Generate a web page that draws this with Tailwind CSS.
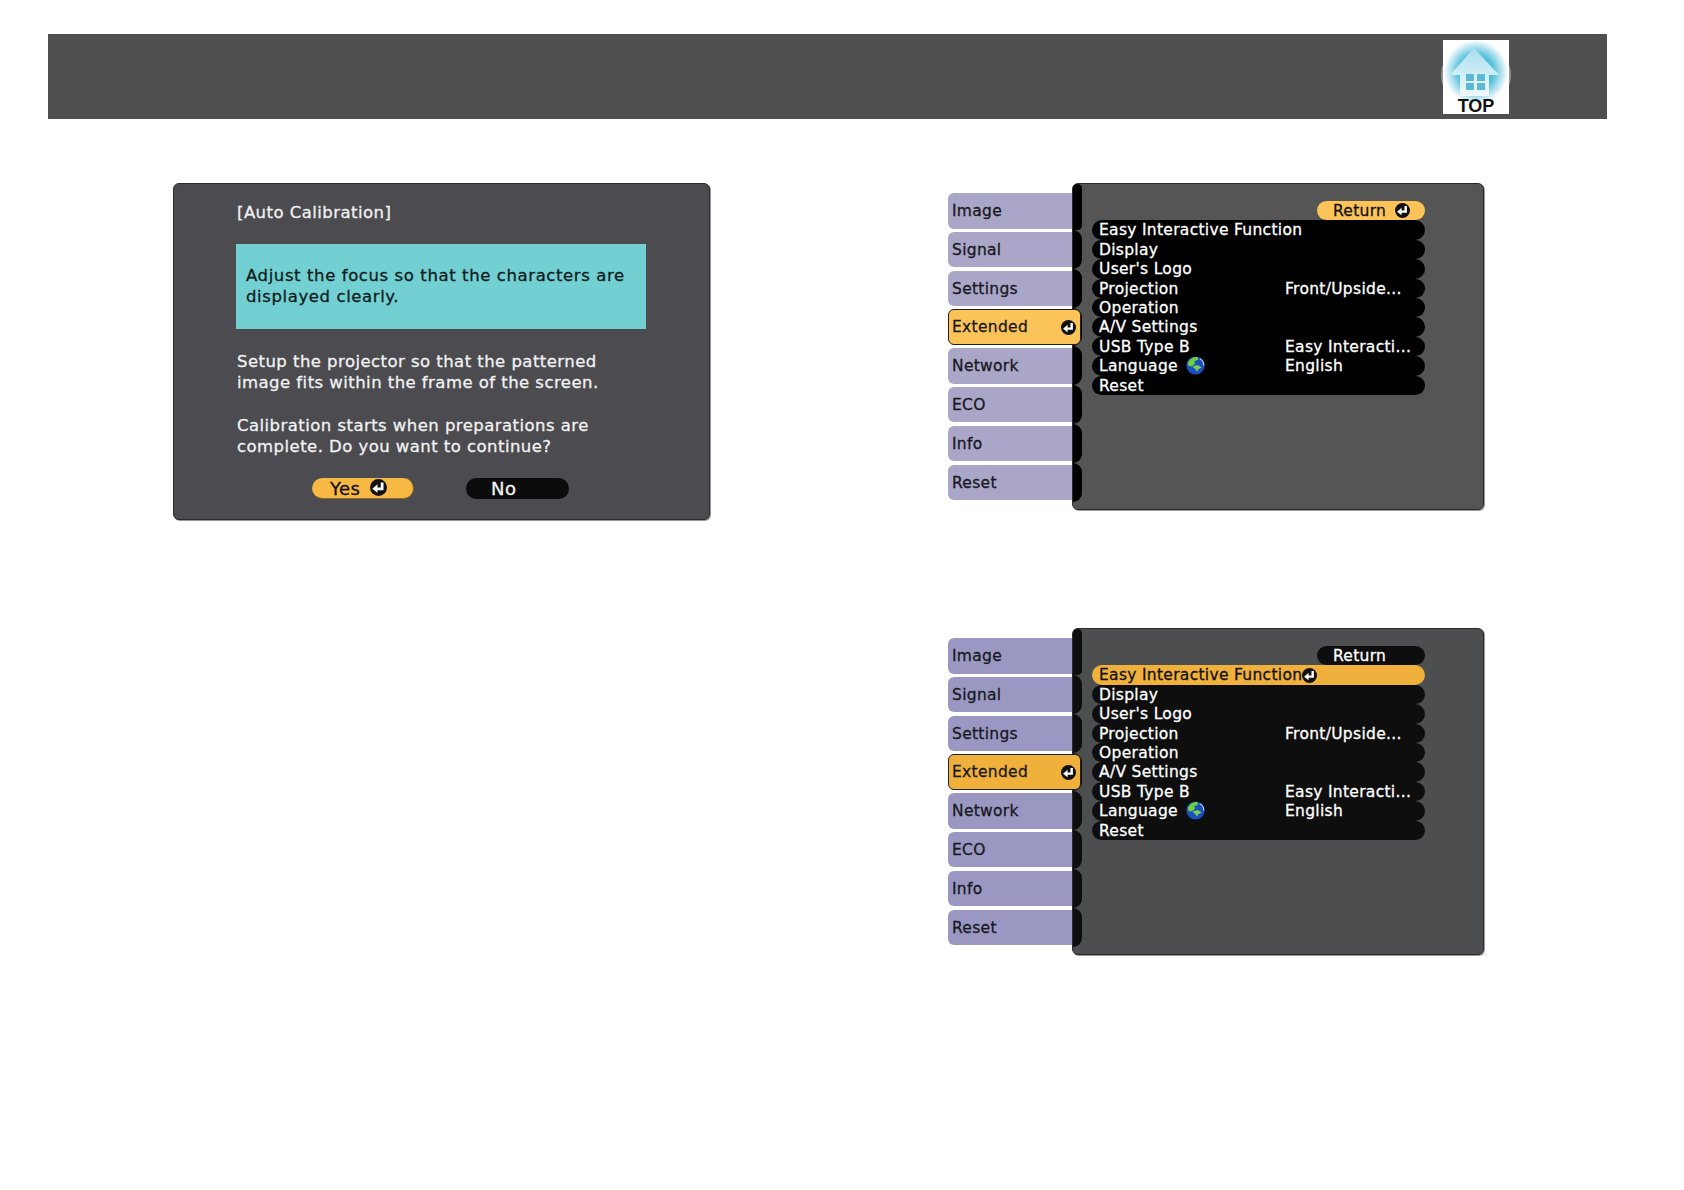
<!DOCTYPE html>
<html lang="en">
<head>
    <meta charset="UTF-8">
    <title>Auto Calibration</title>
    <script src="https://cdn.jsdelivr.net/npm/@tailwindcss/browser@4"></script>
</head>
<body class="bg-white font-['DejaVu_Sans',sans-serif] [-webkit-text-stroke:0.3px]">

    <!-- shared icons -->
    <svg class="absolute" width="0" height="0">
        <symbol id="enter" viewBox="0 0 16 16">
            <circle cx="8" cy="8" r="8" fill="#111"/>
            <path d="M11.4 3.2V9.2H6" fill="none" stroke="#fff" stroke-width="2.6"/>
            <path d="M7 5V13L2.2 9.2Z" fill="#fff"/>
        </symbol>
        <symbol id="globe" viewBox="0 0 18 18">
            <circle cx="9" cy="9" r="8.6" fill="#1b4fc0"/>
            <path d="M3 4.5C5 1.5 9 0.5 11 1.2L11.5 3.5L8 5L8.5 7.5L5 10L2 9C1.5 7 2 6 3 4.5Z" fill="#6fd03c"/>
            <path d="M6 10L11 8.5L15 11L11.5 12.5L10.5 15L9 12.5Z" fill="#7ccf52"/>
            <path d="M13 2.5C15.5 4 17 6.5 16.8 9" fill="none" stroke="#c8e0ff" stroke-width="1"/>
        </symbol>
    </svg>

    <div class="pt-[34px] px-[48px] w-[1684px] h-[1190px] overflow-hidden">

        <!-- header bar -->
        <header class="bg-[#4f4f4f] h-[85px] w-[1559px] flex justify-end pt-[6px] pr-[98px]">
            <div class="relative w-[66px] h-[74px]">
                <div class="absolute left-[-2px] top-[3px] w-[70px] h-[64px] rounded-full bg-white/40"></div>
                <svg class="relative overflow-visible" width="66" height="74" viewBox="0 0 66 74">
                    <defs>
                        <radialGradient id="glow" cx="50%" cy="50%" r="50%">
                            <stop offset="0%" stop-color="#149fc9"/>
                            <stop offset="55%" stop-color="#58c0dc"/>
                            <stop offset="100%" stop-color="#ffffff"/>
                        </radialGradient>
                        <linearGradient id="house" x1="0" y1="0" x2="0" y2="1">
                            <stop offset="0%" stop-color="#a8dfee"/>
                            <stop offset="100%" stop-color="#f0fafc"/>
                        </linearGradient>
                    </defs>
                    <rect width="66" height="74" fill="#fff"/>
                    <circle cx="33" cy="32" r="32" fill="url(#glow)"/>
                    <path d="M31 8L56 35H46V56H17V35H7Z" fill="url(#house)"/>
                    <g fill="#5cb8d6">
                        <rect x="23" y="34" width="8" height="7"/>
                        <rect x="34" y="34" width="8" height="7"/>
                        <rect x="23" y="43" width="8" height="7"/>
                        <rect x="34" y="43" width="8" height="7"/>
                    </g>
                    <text x="33" y="72" text-anchor="middle" font-family="Liberation Sans" font-weight="700" font-size="18" fill="#111">TOP</text>
                </svg>
            </div>
        </header>

        <div class="flex items-start mt-[64px]">

            <!-- auto calibration dialog -->
            <section class="ml-[125px] w-[537px] h-[337px] flex-none bg-[#4b4b50] border border-[#2c2c2c] rounded-md shadow-[1px_1px_0_#9a9a9a] pl-[63px] pt-[18px] text-[16.5px] leading-[21.5px] tracking-[0.45px] text-[#f2f2f2]">
                <p>[Auto Calibration]</p>
                <div class="bg-[#72cfd2] text-[#0c1c20] tracking-[0.6px] w-[410px] h-[85px] -ml-px mt-[20px] pt-[21px] pl-[10px]">
                    <p>Adjust the focus so that the characters are<br>displayed clearly.</p>
                </div>
                <p class="mt-[22px]">Setup the projector so that the patterned<br>image fits within the frame of the screen.</p>
                <p class="mt-[21px]">Calibration starts when preparations are<br>complete. Do you want to continue?</p>
                <div class="flex mt-[20px] ml-[75px] gap-[52px] h-[21px]">
                    <div class="w-[102px] rounded-full bg-[#f7b944] border-b border-r border-[#8a6a20] text-[#111] text-[18px] flex items-center pl-[18px]">
                        <span class="pt-[2px]">Yes</span>
                        <svg class="ml-[10px]" width="17" height="17"><use href="#enter"/></svg>
                    </div>
                    <div class="w-[103px] rounded-full bg-[#0c0c0c] text-[18px] flex items-center pl-[25px] pt-[2px]">No</div>
                </div>
            </section>

            <div class="ml-[238px] flex-none">

                <!-- extended menu, Return selected -->
                <div class="flex items-start text-[15.5px] leading-[19.4px] tracking-[0.3px]">
                    <nav class="w-[124px] flex-none pt-[10px] flex flex-col gap-[3.3px] text-[#181820]">
                        <div class="h-[35.5px] bg-[#a9a6c8] rounded-l-md flex items-center pl-[4px] pt-[2px]">Image</div>
                        <div class="h-[35.5px] bg-[#a9a6c8] rounded-l-md flex items-center pl-[4px] pt-[2px]">Signal</div>
                        <div class="h-[35.5px] bg-[#a9a6c8] rounded-l-md flex items-center pl-[4px] pt-[2px]">Settings</div>
                        <div class="relative z-10 w-[133px] h-[35.5px] bg-[#fcc458] border border-[#222] rounded-md flex items-center justify-between pl-[3px] pr-[4px]"><span class="pt-[2px]">Extended</span><svg width="15" height="15"><use href="#enter"/></svg></div>
                        <div class="h-[35.5px] bg-[#a9a6c8] rounded-l-md flex items-center pl-[4px] pt-[2px]">Network</div>
                        <div class="h-[35.5px] bg-[#a9a6c8] rounded-l-md flex items-center pl-[4px] pt-[2px]">ECO</div>
                        <div class="h-[35.5px] bg-[#a9a6c8] rounded-l-md flex items-center pl-[4px] pt-[2px]">Info</div>
                        <div class="h-[35.5px] bg-[#a9a6c8] rounded-l-md flex items-center pl-[4px] pt-[2px]">Reset</div>
                    </nav>
                    <div class="w-[412px] h-[327px] flex-none flex bg-[#555555] border border-[#2c2c2c] rounded-md shadow-[1px_1px_0_#9a9a9a] text-white">
                        <div class="w-[9px] flex-none">
                            <div class="h-[46px] bg-black rounded-r-md rounded-tl-md"></div>
                            <div class="h-[38.8px] bg-black rounded-r-full"></div>
                            <div class="h-[38.8px] bg-black rounded-r-full"></div>
                            <div class="h-[38.8px] bg-black rounded-r-full"></div>
                            <div class="h-[38.8px] bg-black rounded-r-full"></div>
                            <div class="h-[38.8px] bg-black rounded-r-full"></div>
                            <div class="h-[38.8px] bg-black rounded-r-full"></div>
                            <div class="h-[38.8px] bg-black rounded-r-full"></div>
                        </div>
                        <div class="ml-[10px] w-[333px] pt-[17px]">
                            <div class="ml-auto w-[108px] h-[19.4px] rounded-full bg-[#fcc458] text-[#111] flex items-center pl-[16px]"><span class="pt-[2px]">Return</span><svg class="ml-[9px]" width="15" height="15"><use href="#enter"/></svg></div>
                            <div class="h-[19.4px] rounded-full bg-black flex items-center pl-[7px] pt-[2px]">Easy Interactive Function</div>
                            <div class="h-[19.4px] rounded-full bg-black flex items-center pl-[7px] pt-[2px]">Display</div>
                            <div class="h-[19.4px] rounded-full bg-black flex items-center pl-[7px] pt-[2px]">User's Logo</div>
                            <div class="h-[19.4px] rounded-full bg-black flex items-center pl-[7px] pt-[2px]"><span class="w-[186px]">Projection</span><span>Front/Upside...</span></div>
                            <div class="h-[19.4px] rounded-full bg-black flex items-center pl-[7px] pt-[2px]">Operation</div>
                            <div class="h-[19.4px] rounded-full bg-black flex items-center pl-[7px] pt-[2px]">A/V Settings</div>
                            <div class="h-[19.4px] rounded-full bg-black flex items-center pl-[7px] pt-[2px]"><span class="w-[186px]">USB Type B</span><span>Easy Interacti...</span></div>
                            <div class="h-[19.4px] rounded-full bg-black flex items-center pl-[7px]"><span class="w-[186px] flex items-center"><span class="pt-[2px]">Language</span><svg class="ml-[8px]" width="19" height="19"><use href="#globe"/></svg></span><span class="pt-[2px]">English</span></div>
                            <div class="h-[19.4px] rounded-full bg-black flex items-center pl-[7px] pt-[2px]">Reset</div>
                        </div>
                    </div>
                </div>

                <!-- extended menu, first item selected -->
                <div class="flex items-start mt-[118px] text-[15.5px] leading-[19.4px] tracking-[0.3px]">
                    <nav class="w-[124px] flex-none pt-[10px] flex flex-col gap-[3.3px] text-[#181820]">
                        <div class="h-[35.5px] bg-[#9a98c2] rounded-l-md flex items-center pl-[4px] pt-[2px]">Image</div>
                        <div class="h-[35.5px] bg-[#9a98c2] rounded-l-md flex items-center pl-[4px] pt-[2px]">Signal</div>
                        <div class="h-[35.5px] bg-[#9a98c2] rounded-l-md flex items-center pl-[4px] pt-[2px]">Settings</div>
                        <div class="relative z-10 w-[133px] h-[35.5px] bg-[#f0b03c] border border-[#222] rounded-md flex items-center justify-between pl-[3px] pr-[4px]"><span class="pt-[2px]">Extended</span><svg width="15" height="15"><use href="#enter"/></svg></div>
                        <div class="h-[35.5px] bg-[#9a98c2] rounded-l-md flex items-center pl-[4px] pt-[2px]">Network</div>
                        <div class="h-[35.5px] bg-[#9a98c2] rounded-l-md flex items-center pl-[4px] pt-[2px]">ECO</div>
                        <div class="h-[35.5px] bg-[#9a98c2] rounded-l-md flex items-center pl-[4px] pt-[2px]">Info</div>
                        <div class="h-[35.5px] bg-[#9a98c2] rounded-l-md flex items-center pl-[4px] pt-[2px]">Reset</div>
                    </nav>
                    <div class="w-[412px] h-[327px] flex-none flex bg-[#4d4e50] border border-[#2c2c2c] rounded-md shadow-[1px_1px_0_#9a9a9a] text-white">
                        <div class="w-[9px] flex-none">
                            <div class="h-[46px] bg-[#0e0e0e] rounded-r-md rounded-tl-md"></div>
                            <div class="h-[38.8px] bg-[#0e0e0e] rounded-r-full"></div>
                            <div class="h-[38.8px] bg-[#0e0e0e] rounded-r-full"></div>
                            <div class="h-[38.8px] bg-[#0e0e0e] rounded-r-full"></div>
                            <div class="h-[38.8px] bg-[#0e0e0e] rounded-r-full"></div>
                            <div class="h-[38.8px] bg-[#0e0e0e] rounded-r-full"></div>
                            <div class="h-[38.8px] bg-[#0e0e0e] rounded-r-full"></div>
                            <div class="h-[38.8px] bg-[#0e0e0e] rounded-r-full"></div>
                        </div>
                        <div class="ml-[10px] w-[333px] pt-[17px]">
                            <div class="ml-auto w-[108px] h-[19.4px] rounded-full bg-[#0e0e0e] flex items-center pl-[16px] pt-[2px]">Return</div>
                            <div class="h-[19.4px] rounded-full bg-[#f0b03c] text-[#111] flex items-center pl-[7px]"><span class="pt-[2px]">Easy Interactive Function</span><svg width="15" height="15"><use href="#enter"/></svg></div>
                            <div class="h-[19.4px] rounded-full bg-[#0e0e0e] flex items-center pl-[7px] pt-[2px]">Display</div>
                            <div class="h-[19.4px] rounded-full bg-[#0e0e0e] flex items-center pl-[7px] pt-[2px]">User's Logo</div>
                            <div class="h-[19.4px] rounded-full bg-[#0e0e0e] flex items-center pl-[7px] pt-[2px]"><span class="w-[186px]">Projection</span><span>Front/Upside...</span></div>
                            <div class="h-[19.4px] rounded-full bg-[#0e0e0e] flex items-center pl-[7px] pt-[2px]">Operation</div>
                            <div class="h-[19.4px] rounded-full bg-[#0e0e0e] flex items-center pl-[7px] pt-[2px]">A/V Settings</div>
                            <div class="h-[19.4px] rounded-full bg-[#0e0e0e] flex items-center pl-[7px] pt-[2px]"><span class="w-[186px]">USB Type B</span><span>Easy Interacti...</span></div>
                            <div class="h-[19.4px] rounded-full bg-[#0e0e0e] flex items-center pl-[7px]"><span class="w-[186px] flex items-center"><span class="pt-[2px]">Language</span><svg class="ml-[8px]" width="19" height="19"><use href="#globe"/></svg></span><span class="pt-[2px]">English</span></div>
                            <div class="h-[19.4px] rounded-full bg-[#0e0e0e] flex items-center pl-[7px] pt-[2px]">Reset</div>
                        </div>
                    </div>
                </div>

            </div>
        </div>
    </div>
</body>
</html>
